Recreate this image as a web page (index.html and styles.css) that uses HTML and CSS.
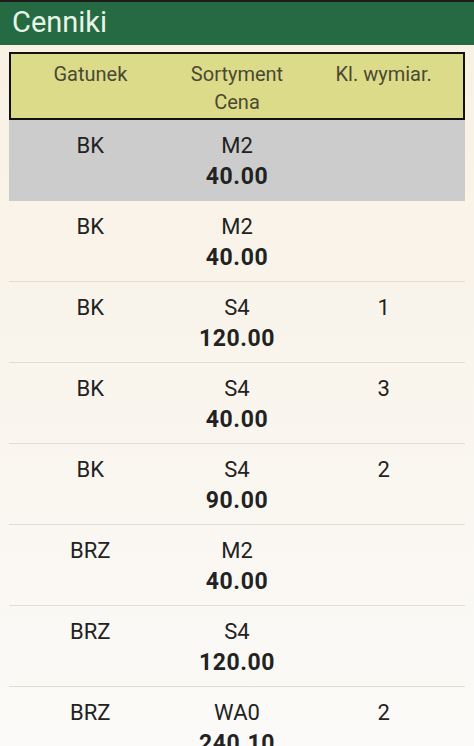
FILE: index.html
```html
<!DOCTYPE html>
<html lang="pl">
<head>
    <meta charset="UTF-8">
    <meta name="viewport" content="width=device-width, initial-scale=1.0">
    <title>Cenniki</title>
    <link rel="stylesheet" href="styles.css">
</head>
<body>
    <!-- pasek tytułu -->
    <div class="title-bar">Cenniki</div>

    <!-- nagłówek listy -->
    <div class="list-head">
        <div class="col">Gatunek</div>
        <div class="col">Sortyment<br>Cena</div>
        <div class="col">Kl. wymiar.</div>
    </div>

    <!-- lista cen -->
    <div class="price-list">
        <div class="row selected">
            <div class="col">BK</div>
            <div class="col">M2<br><b>40.00</b></div>
            <div class="col"></div>
        </div>
        <div class="row">
            <div class="col">BK</div>
            <div class="col">M2<br><b>40.00</b></div>
            <div class="col"></div>
        </div>
        <div class="row">
            <div class="col">BK</div>
            <div class="col">S4<br><b>120.00</b></div>
            <div class="col">1</div>
        </div>
        <div class="row">
            <div class="col">BK</div>
            <div class="col">S4<br><b>40.00</b></div>
            <div class="col">3</div>
        </div>
        <div class="row">
            <div class="col">BK</div>
            <div class="col">S4<br><b>90.00</b></div>
            <div class="col">2</div>
        </div>
        <div class="row">
            <div class="col">BRZ</div>
            <div class="col">M2<br><b>40.00</b></div>
            <div class="col"></div>
        </div>
        <div class="row">
            <div class="col">BRZ</div>
            <div class="col">S4<br><b>120.00</b></div>
            <div class="col"></div>
        </div>
        <div class="row">
            <div class="col">BRZ</div>
            <div class="col">WA0<br><b>240.10</b></div>
            <div class="col">2</div>
        </div>
    </div>
</body>
</html>
```
FILE: styles.css
```css
html, body {
    height: 100%;
    overflow: hidden;
}
body {
    margin: 0;
    font-family: Roboto, 'Noto Sans', sans-serif;
    background: linear-gradient(#f8f0e2, #fbfaf8);
    color: #222;
}
.title-bar {
    border-top: 2px solid #1c1c1c;
    background-color: #256a42;
    color: #e6f5e6;
    height: 43px;
    line-height: 41px;
    font-size: 29px;
    padding-left: 12px;
}
.list-head {
    display: flex;
    margin: 7px 9px 0;
    padding: 6px 6px 2px;
    border: 2px solid #111;
    background-color: #dcdb89;
    color: #4a4a32;
    font-size: 20px;
    line-height: 28px;
}
.col {
    flex: 1;
    text-align: center;
}
.price-list {
    margin: 0 9px;
}
.row {
    display: flex;
    padding: 10px 8px 8px;
    border-bottom: 1px solid #e2ddd3;
    font-size: 22px;
    line-height: 31px;
}
.row b {
    font-size: 23px;
    letter-spacing: 0.6px;
}
/* zaznaczony wiersz */
.row.selected {
    background-color: #cccccc;
    border-bottom-color: #cccccc;
}
```
